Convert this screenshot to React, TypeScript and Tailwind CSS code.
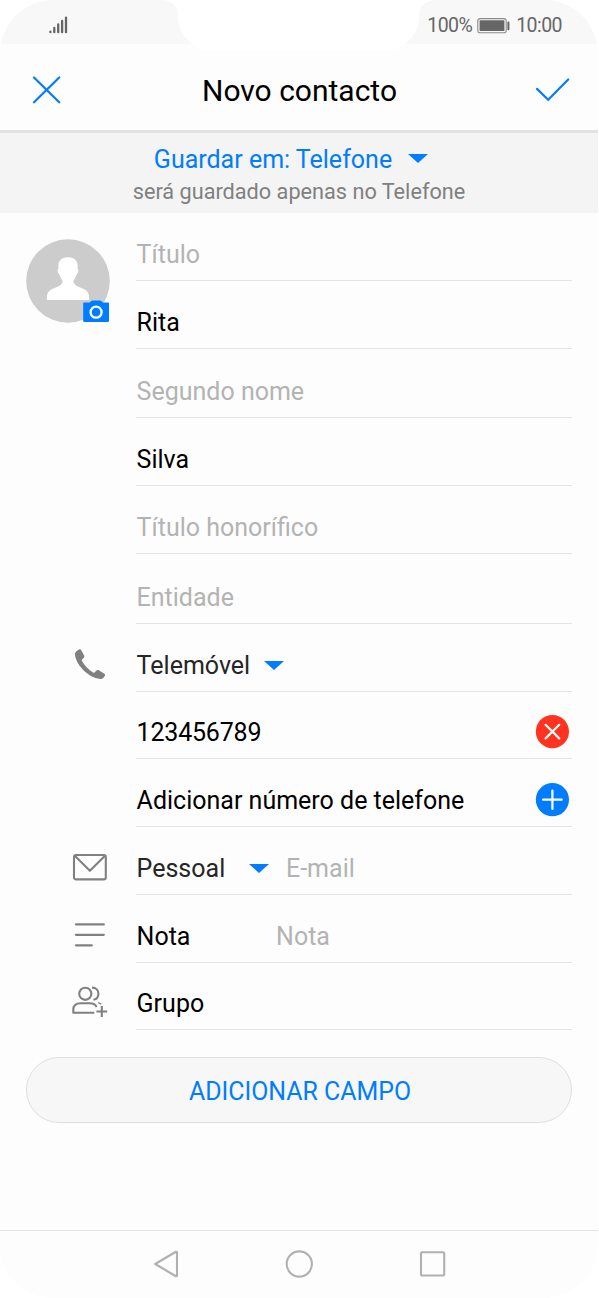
import type { ReactNode } from "react";

function Caret({ className = "" }: { className?: string }) {
  return (
    <svg className={`h-[9px] w-5 shrink-0 ${className}`} viewBox="0 0 20 9">
      <path d="M0 0H20L10 9Z" fill="#007dff" />
    </svg>
  );
}

function StatusBar() {
  return (
    <header className="relative flex h-[44px] shrink-0 items-start justify-between bg-[#f8f8f8] pl-[49px] pr-[36px] text-[#666]">
      <svg className="mt-4 h-[18px] w-[19px]" viewBox="0 0 19 18" stroke="#666" strokeWidth="2.3" strokeLinecap="round">
        <path d="M1.4 15.6V16.2M5.3 12V16.2M9.2 8.4V16.2M13.1 5V16.2M17 1.6V16.2" />
      </svg>
      <div className="mt-[13px] flex items-center text-[19.5px] leading-[26px]">
        <span className="tracking-[-0.55px]">100%</span>
        <svg className="ml-[5px] mr-[6px] h-4 w-[33px]" viewBox="0 0 33 16">
          <rect x="0.8" y="0.6" width="28.4" height="14.2" rx="2.4" fill="none" stroke="#8b8b8b" strokeWidth="1.1" />
          <rect x="2.6" y="2.3" width="24.8" height="10.8" rx="0.6" fill="#666" />
          <rect x="30.4" y="3.6" width="2" height="8.6" rx="0.8" fill="#666" />
        </svg>
        <span className="tracking-[-0.55px]">10:00</span>
      </div>
      <svg className="absolute left-[160px] top-0 h-[51px] w-[277px]" viewBox="0 0 277 51">
        <path d="M0 0C12 0 18 6 18 16C18 35 33 51 55 51H222C244 51 259 35 259 16C259 6 265 0 277 0Z" fill="#fff" />
      </svg>
    </header>
  );
}

function Row({ icon, height = "h-[68px]", children }: { icon?: ReactNode; height?: string; children: ReactNode }) {
  return (
    <div className={`flex shrink-0 pr-[26px] ${height}`}>
      <div className="flex w-[136px] items-end pb-2">{icon}</div>
      <div className="flex flex-1 items-end border-b border-[#e4e4e4] pb-[7px] pl-[0.6px]">{children}</div>
    </div>
  );
}

function Placeholder({ children }: { children: ReactNode }) {
  return <span className="text-[#b3b3b3]">{children}</span>;
}

function Avatar() {
  return (
    <svg className="-mb-[50px] ml-[26px] h-[84px] w-[84px] shrink-0" viewBox="0 0 84 84">
      <circle cx="42" cy="42" r="41.8" fill="#ccc" />
      <path
        d="M42 18.2C36 18.2 32.4 21.6 32.4 26.5V29.6C31 30.5 31.8 34.6 33.5 35.5C34.3 38.3 35.3 40.4 36.6 42C36.6 44.5 34.6 46.4 32 47.5L25.8 50.3C22.5 51.8 20.9 54.6 20.9 58V60.9H63.1V58C63.1 54.6 61.5 51.8 58.2 50.3L52 47.5C49.4 46.4 47.4 44.5 47.4 42C48.7 40.4 49.7 38.3 50.5 35.5C52.2 34.6 53 30.5 51.6 29.6V26.5C51.6 21.6 48 18.2 42 18.2Z"
        fill="#fff"
      />
      <path d="M58 63.4H63.5L65.6 61.8Q66 61.5 66.5 61.5H74Q74.6 61.5 75 61.8L77 63.4H82Q83 63.4 83 64.4V82Q83 83 82 83H58.2Q57.2 83 57.2 82V64.4Q57.2 63.4 58 63.4Z" fill="#007dff" />
      <circle cx="70.1" cy="73.2" r="5.5" fill="none" stroke="#fff" strokeWidth="2.3" />
    </svg>
  );
}

const phoneIcon = (
  <svg className="mb-1 ml-[74px] h-[31px] w-8" viewBox="0 0 32 31">
    <path
      d="M5.2.5C3.2 1.3.8 3.2.9 5.3C1.6 14.8 13.3 28.7 26.5 30C28.4 30.1 30.2 28.3 31 26.4C31.2 25.7 30.9 25.2 30.4 24.8L25.2 21.4C24.2 20.8 23.2 20.8 22.4 21.6L20.5 23.4C19.9 23.8 19.2 23.7 18.6 23.3C14.5 20.8 10.4 16.4 8 12.1C7.7 11.4 7.7 10.8 8.2 10.3L9.7 8.9C10.4 8.2 10.5 7.4 10.1 6.5L7.3 1.3C6.8.4 6.1.1 5.2.5Z"
      fill="#808080"
    />
  </svg>
);

const mailIcon = (
  <svg className="mb-[6px] ml-[72px] h-[28px] w-9" viewBox="0 0 36 28" fill="none" stroke="#808080" strokeWidth="2.1" strokeLinejoin="round">
    <rect x="2" y="2" width="31.8" height="24.4" rx="2" />
    <path d="M2.8 2.8L17.9 17.8L33 2.8" />
  </svg>
);

const noteIcon = (
  <svg className="mb-[7px] ml-[74px] h-[25px] w-8" viewBox="0 0 32 25" stroke="#808080" strokeWidth="2.2" strokeLinecap="round">
    <path d="M2 1.4H29.8M2 11.8H29.8M2 22.3H17.8" />
  </svg>
);

const groupIcon = (
  <svg className="mb-1 ml-[72px] h-8 w-9" viewBox="0 0 36 32" fill="none" stroke="#808080" strokeWidth="2.1">
    <circle cx="13.3" cy="7.8" r="6.1" />
    <path d="M20 1.6C24.2 1.6 26.4 4.3 26.4 7.7C26.4 10.9 24.4 13.2 21.4 13.8" />
    <path d="M22.3 26.7H1.3V23.8C1.3 19.4 4.2 17.2 8.6 17.2H17.5C21 17.2 23.6 18.5 24.6 21" strokeLinejoin="round" />
    <path d="M26.3 16.7L29.2 18.1" strokeWidth="1.3" />
    <path d="M29.8 20.1V30.9M24.4 25.5H35.2" />
  </svg>
);

const deleteButton = (
  <svg className="mb-[2px] ml-auto mr-[3px] h-[34px] w-[34px]" viewBox="0 0 34 34">
    <circle cx="17.4" cy="16.6" r="16.6" fill="#ff3320" />
    <path d="M10.6 9.8L24.2 23.4M24.2 9.8L10.6 23.4" stroke="#fff" strokeWidth="2.2" strokeLinecap="round" />
  </svg>
);

const addButton = (
  <svg className="mb-[2px] ml-auto mr-[3px] h-[34px] w-[34px]" viewBox="0 0 34 34">
    <circle cx="17.4" cy="16.7" r="16.6" fill="#007dff" />
    <path d="M17.4 7.5V26M8.1 16.7H26.7" stroke="#fff" strokeWidth="2.2" strokeLinecap="round" />
  </svg>
);

export default function App() {
  return (
    <div className="h-[1298px] w-[599px] bg-white font-['Roboto',sans-serif] text-black">
      <main className="flex h-full w-[598px] flex-col overflow-hidden rounded-[54px] bg-[#fdfdfd]">
        <StatusBar />
        <div className="flex h-[89px] shrink-0 items-center justify-between border-b-[3px] border-[#e2e2e2] pl-8 pr-7 pt-[5px]">
          <svg className="h-7 w-[29px]" viewBox="0 0 29 28" stroke="#007dff" strokeWidth="2.2" strokeLinecap="round">
            <path d="M2 1.5L27.2 26.3M27.2 1.5L2 26.3" />
          </svg>
          <h1 className="pl-[3px] pt-[3px] text-[30px] leading-9">Novo contacto</h1>
          <svg className="h-6 w-[35px]" viewBox="0 0 35 24" fill="none" stroke="#007dff" strokeWidth="2.2" strokeLinecap="round">
            <path d="M2 10.9L13.2 21.7L33.2 1.5" />
          </svg>
        </div>
        <section className="flex h-[80px] shrink-0 flex-col items-center bg-[#f4f4f4] pt-[11px]">
          <div className="flex items-center pr-4 text-[25px] leading-8 text-[#007dff]">
            Guardar em: Telefone
            <Caret className="mb-[3px] ml-4" />
          </div>
          <p className="text-[21.7px] leading-8 text-[#808080]">será guardado apenas no Telefone</p>
        </section>
        <section className="flex flex-col text-[25px] leading-9">
          <Row icon={<Avatar />}><Placeholder>Título</Placeholder></Row>
          <Row>Rita</Row>
          <Row height="h-[69px]"><Placeholder>Segundo nome</Placeholder></Row>
          <Row>Silva</Row>
          <Row><Placeholder>Título honorífico</Placeholder></Row>
          <Row height="h-[70px]"><Placeholder>Entidade</Placeholder></Row>
          <Row icon={phoneIcon}>
            <span className="text-[#262626]">Telemóvel</span>
            <Caret className="mb-[14px] ml-[14px]" />
          </Row>
          <Row height="h-[67px]"><span className="tracking-[-0.2px]">123456789</span>{deleteButton}</Row>
          <Row>Adicionar número de telefone{addButton}</Row>
          <Row icon={mailIcon}>
            <span className="w-[112.4px] text-[#262626]">Pessoal</span>
            <Caret className="mb-[14px] mr-[17px]" />
            <Placeholder>E-mail</Placeholder>
          </Row>
          <Row icon={noteIcon}>
            <span className="w-[139.5px]">Nota</span>
            <Placeholder>Nota</Placeholder>
          </Row>
          <Row icon={groupIcon} height="h-[67px]">Grupo</Row>
        </section>
        <button className="mx-[26px] mt-[27px] h-[66px] shrink-0 rounded-full border border-[#dedede] bg-[#f7f7f7] pl-[2px] pt-[3px] text-[24.9px] text-[#007dff]">
          ADICIONAR CAMPO
        </button>
        <nav className="mt-auto flex h-[68px] shrink-0 items-center justify-between border-t border-[#e3e3e3] pb-[2px] pl-[153px] pr-[152px]">
          <svg className="h-7 w-[27px]" viewBox="0 0 27 28" fill="none" stroke="#b0b0b0" strokeWidth="2.1" strokeLinejoin="round">
            <path d="M2.2 14L22.5 2Q24 1.2 24 2.8V25.2Q24 26.8 22.5 26L2.2 14Z" />
          </svg>
          <svg className="h-7 w-7" viewBox="0 0 28 28" fill="none" stroke="#b0b0b0" strokeWidth="2.1">
            <circle cx="14.3" cy="14" r="12.6" />
          </svg>
          <svg className="h-7 w-7" viewBox="0 0 28 28" fill="none" stroke="#b0b0b0" strokeWidth="2.1">
            <rect x="3" y="2.3" width="23.2" height="23.2" rx="1" />
          </svg>
        </nav>
      </main>
    </div>
  );
}
